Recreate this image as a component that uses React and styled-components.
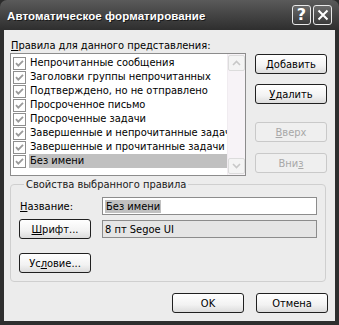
import React from "react";
import styled, { createGlobalStyle } from "styled-components";

const GlobalStyle = createGlobalStyle`
  html, body {
    margin: 0;
    padding: 0;
    background: #2b2b2b;
  }
  body {
    font-family: "DejaVu Sans Condensed", "Liberation Sans", sans-serif;
    font-size: 11px;
    color: #000;
  }
`;

const rules = [
  "Непрочитанные сообщения",
  "Заголовки группы непрочитанных",
  "Подтверждено, но не отправлено",
  "Просроченное письмо",
  "Просроченные задачи",
  "Завершенные и непрочитанные задачи",
  "Завершенные и прочитанные задачи",
  "Без имени",
];

const Window = styled.div`
  width: 339px;
  height: 325px;
  box-sizing: border-box;
  display: flex;
  flex-direction: column;
  background: linear-gradient(#5a5a5a, #2e2e2e 30px, #2e2e2e);
  border-radius: 7px 7px 0 0;
  padding: 0 4px 4px 4px;
  overflow: hidden;
`;

const TitleBar = styled.div`
  height: 30px;
  display: flex;
  align-items: center;
  justify-content: space-between;
  padding: 0 3px 0 3px;
`;

const Title = styled.div`
  color: #fff;
  font-family: "Liberation Sans", Arial, sans-serif;
  font-weight: bold;
  font-size: 11.5px;
  letter-spacing: 0.1px;
  text-shadow: 1px 1px 0 #1a1a1a;
  margin-top: 1px;
`;

const Caps = styled.div`
  display: flex;
  gap: 2px;
`;

const CapButton = styled.div`
  width: 19px;
  height: 20px;
  box-sizing: border-box;
  border: 1px solid #e8e8e8;
  border-radius: 3px;
  background: linear-gradient(#6a6a6a, #3a3a3a);
  display: flex;
  align-items: center;
  justify-content: center;
  color: #fff;
  font-family: "DejaVu Sans", sans-serif;
  font-weight: bold;
  font-size: 16px;
  line-height: 1;
`;

const Client = styled.div`
  flex: 1;
  background: #ececec;
  display: flex;
  flex-direction: column;
  padding: 0 5px 0 6px;
`;

const ListLabel = styled.div`
  margin: 8px 0 0 1px;
  height: 15px;
  line-height: 15px;
`;

const U = styled.span`
  text-decoration: underline;
  text-underline-offset: 1px;
`;

const TopRow = styled.div`
  display: flex;
  justify-content: space-between;
`;

const ListBox = styled.div`
  width: 236px;
  height: 123px;
  box-sizing: border-box;
  border: 1px solid #8c8c8c;
  background: #fff;
  display: flex;
`;

const Items = styled.div`
  flex: 1;
  padding: 2px 0 0 2px;
  overflow: hidden;
`;

const Item = styled.div`
  display: flex;
  align-items: center;
  height: 14px;
  white-space: nowrap;
`;

const ItemText = styled.span`
  margin-left: 3px;
  padding: 0 1px;
  flex: 1;
  line-height: 14px;
  background: ${(p) => (p.$selected ? "#c0c0c0" : "transparent")};
  overflow: hidden;
`;

const Scroll = styled.div`
  width: 17px;
  background: #f7f3f7;
  display: flex;
  flex-direction: column;
  justify-content: space-between;
  border-left: 1px solid #f0ecf0;
`;

const ScrollBtn = styled.div`
  height: 16px;
  margin: 1px 0;
  box-sizing: border-box;
  border: 1px solid #dcdcdc;
  border-radius: 2px;
  background: #f4f4f4;
  display: flex;
  align-items: center;
  justify-content: center;
`;

const Buttons = styled.div`
  display: flex;
  flex-direction: column;
  width: 72px;
  margin-right: 3px;
`;

const Button = styled.div`
  width: ${(p) => p.$w || 72}px;
  height: 20px;
  box-sizing: border-box;
  border: 1px solid ${(p) => (p.$disabled ? "#c9c9c9" : "#202020")};
  border-radius: 3px;
  background: ${(p) =>
    p.$disabled ? "#efefef" : "linear-gradient(#ffffff, #f2f2f2 60%, #dcdcdc)"};
  color: ${(p) => (p.$disabled ? "#a8a8a8" : "#000")};
  display: flex;
  align-items: center;
  justify-content: center;
  margin-top: ${(p) => p.$mt || 0}px;
`;

const Group = styled.fieldset`
  margin: 2px 0 0 0;
  padding: 5px 8px 7px 8px;
  border: 1px solid #cfcfcf;
  border-radius: 4px;
  width: 316px;
  box-sizing: border-box;
  height: 104px;
`;

const Legend = styled.legend`
  padding: 0 2px;
  margin-left: 5px;
  color: #202020;
`;

const Field = styled.div`
  display: flex;
  align-items: center;
  justify-content: space-between;
  margin-top: ${(p) => p.$mt || 0}px;
`;

const FieldLabel = styled.div`
  margin-left: 1px;
`;

const Input = styled.div`
  width: 215px;
  height: 18px;
  box-sizing: border-box;
  border: 1px solid #8c8c8c;
  background: ${(p) => (p.$readonly ? "#e5e5e5" : "#fff")};
  display: flex;
  align-items: center;
  padding-left: 2px;
`;

const Selected = styled.span`
  background: #c0c0c0;
  padding: 0 1px;
`;

const Footer = styled.div`
  display: flex;
  justify-content: flex-end;
  gap: 12px;
  margin: 11px 2px 0 0;
`;

const Check = () => (
  <svg width="13" height="13" viewBox="0 0 13 13">
    <rect x="0.5" y="0.5" width="12" height="12" fill="#fff" stroke="#8e8e8e" />
    <path d="M3 6.2 L5.3 8.6 L10 3.8" fill="none" stroke="#9a9a9a" strokeWidth="1.8" />
  </svg>
);

const Chevron = ({ up }) => (
  <svg width="9" height="6" viewBox="0 0 9 6">
    <path
      d={up ? "M1 5 L4.5 1.5 L8 5" : "M1 1 L4.5 4.5 L8 1"}
      fill="none"
      stroke="#c8c8c8"
      strokeWidth="1.6"
    />
  </svg>
);

export default function App() {
  return (
    <>
      <GlobalStyle />
      <Window>
        <TitleBar>
          <Title>Автоматическое форматирование</Title>
          <Caps>
            <CapButton>?</CapButton>
            <CapButton>
              <svg width="12" height="12" viewBox="0 0 12 12">
                <path d="M1.5 1.5 L10.5 10.5 M10.5 1.5 L1.5 10.5" stroke="#fff" strokeWidth="2" />
              </svg>
            </CapButton>
          </Caps>
        </TitleBar>
        <Client>
          <ListLabel>
            <U>П</U>равила для данного представления:
          </ListLabel>
          <TopRow>
            <ListBox>
              <Items>
                {rules.map((r, i) => (
                  <Item key={r}>
                    <Check />
                    <ItemText $selected={i === rules.length - 1}>{r}</ItemText>
                  </Item>
                ))}
              </Items>
              <Scroll>
                <ScrollBtn>
                  <Chevron up />
                </ScrollBtn>
                <ScrollBtn>
                  <Chevron />
                </ScrollBtn>
              </Scroll>
            </ListBox>
            <Buttons>
              <Button $mt={1}>
                <U>Д</U>обавить
              </Button>
              <Button $mt={10}>
                <U>У</U>далить
              </Button>
              <Button $mt={18} $disabled>
                <U>В</U>верх
              </Button>
              <Button $mt={11} $disabled>
                Вни<U>з</U>
              </Button>
            </Buttons>
          </TopRow>
          <Group>
            <Legend>Свойства выбранного правила</Legend>
            <Field $mt={1}>
              <FieldLabel>
                <U>Н</U>азвание:
              </FieldLabel>
              <Input>
                <Selected>Без имени</Selected>
              </Input>
            </Field>
            <Field $mt={4}>
              <Button>
                <U>Ш</U>рифт...
              </Button>
              <Input $readonly>8 пт Segoe UI</Input>
            </Field>
            <Field $mt={14}>
              <Button>
                Ус<U>л</U>овие...
              </Button>
            </Field>
          </Group>
          <Footer>
            <Button>OK</Button>
            <Button>Отмена</Button>
          </Footer>
        </Client>
      </Window>
    </>
  );
}
